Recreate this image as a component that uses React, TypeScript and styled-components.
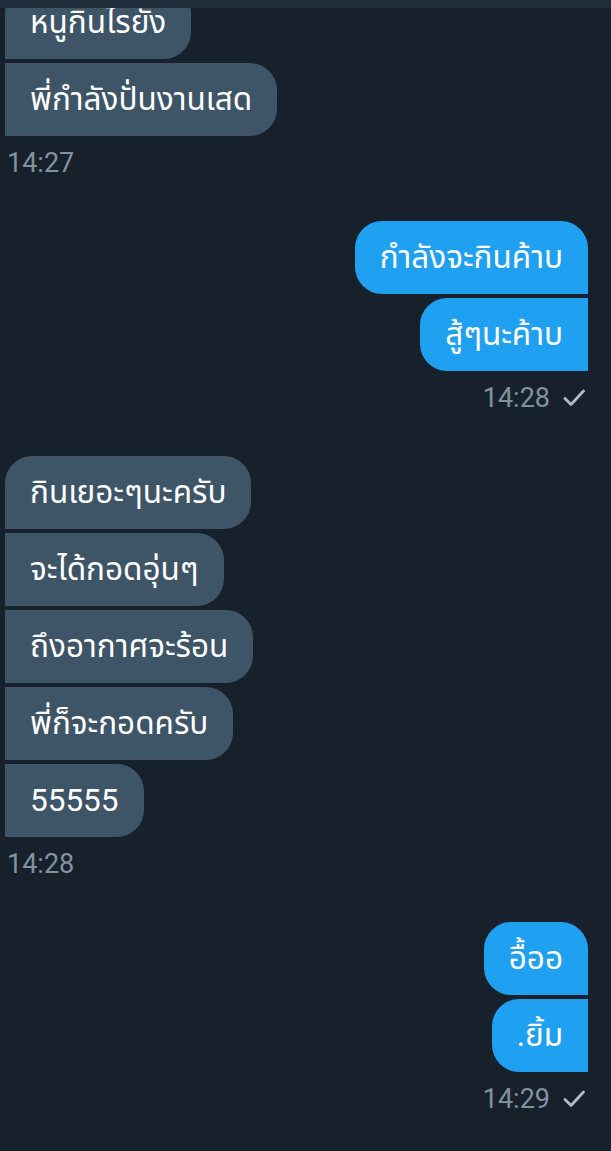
import React from "react";
import styled, { createGlobalStyle, css } from "styled-components";

const Global = createGlobalStyle`
  html, body { margin: 0; padding: 0; background: #17212b; }
  body { font-family: Roboto, "Noto Sans Thai", "Noto Sans", sans-serif; -webkit-font-smoothing: antialiased; }
`;

const Screen = styled.div`
  width: 611px;
  height: 1151px;
  overflow: hidden;
  background: #17212b;
  display: flex;
  flex-direction: column;
`;

const TopBar = styled.div`
  height: 8px;
  flex-shrink: 0;
  background: #202c3a;
  position: relative;
  z-index: 1;
`;

const Feed = styled.div`
  flex: 1;
  overflow: hidden;
`;

const List = styled.div`
  display: flex;
  flex-direction: column;
  gap: 44px;
  margin-top: -22px;
  padding: 0 23px 0 5px;
`;

type Side = "in" | "out";

const Group = styled.div<{ $side: Side }>`
  display: flex;
  flex-direction: column;
  gap: 4px;
  align-items: ${(p) => (p.$side === "in" ? "flex-start" : "flex-end")};
`;

const R = 27;

const Bubble = styled.div<{ $side: Side; $first: boolean }>`
  font-size: 31.5px;
  line-height: 37px;
  padding: 18px 25px;
  color: #ffffff;
  white-space: nowrap;
  ${(p) =>
    p.$side === "in"
      ? css`
          background: #3e5467;
          border-radius: ${p.$first ? R : 0}px ${R}px ${R}px 0;
        `
      : css`
          background: #1fa0f0;
          border-radius: ${R}px ${p.$first ? R : 0}px 0 ${R}px;
        `}
`;

const Meta = styled.div<{ $side: Side }>`
  margin-top: 9px;
  display: flex;
  align-items: center;
  gap: 13px;
  font-size: 27px;
  line-height: 28px;
  color: #8292a1;
  padding: ${(p) => (p.$side === "in" ? "0 0 0 2px" : "0 3px 0 0")};
`;

const Check = () => (
  <svg width="22" height="18" viewBox="0 0 22 18" fill="none">
    <path d="M2 9.5 L8 15.5 L20.5 2" stroke="#aebbc6" strokeWidth="2.8" strokeLinecap="round" strokeLinejoin="round" />
  </svg>
);

const groups: { side: Side; msgs: string[]; time: string }[] = [
  { side: "in", msgs: ["หนูกินไรยัง", "พี่กำลังปั่นงานเสด"], time: "14:27" },
  { side: "out", msgs: ["กำลังจะกินค้าบ", "สู้ๆนะค้าบ"], time: "14:28" },
  {
    side: "in",
    msgs: ["กินเยอะๆนะครับ", "จะได้กอดอุ่นๆ", "ถึงอากาศจะร้อน", "พี่ก็จะกอดครับ", "55555"],
    time: "14:28",
  },
  { side: "out", msgs: ["อื้ออ", ".ยิ้ม"], time: "14:29" },
];

export default function App() {
  return (
    <Screen>
      <Global />
      <TopBar />
      <Feed>
        <List>
          {groups.map((g, gi) => (
            <Group key={gi} $side={g.side}>
              {g.msgs.map((m, i) => (
                <Bubble key={i} $side={g.side} $first={i === 0}>
                  {m}
                </Bubble>
              ))}
              <Meta $side={g.side}>
                <span>{g.time}</span>
                {g.side === "out" && <Check />}
              </Meta>
            </Group>
          ))}
        </List>
      </Feed>
    </Screen>
  );
}
